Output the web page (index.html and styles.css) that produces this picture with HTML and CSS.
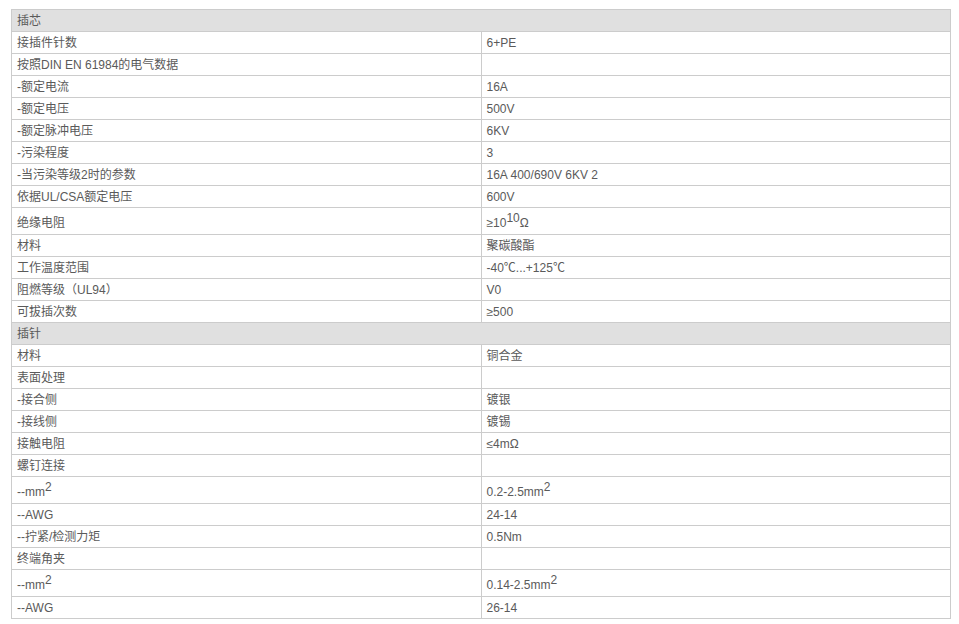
FILE: index.html
```html
<!DOCTYPE html>
<html lang="zh">
<head>
<meta charset="utf-8">
<title>参数</title>
<link rel="stylesheet" href="styles.css">
</head>
<body>
<table class="spec">
  <tr class="group"><td colspan="2">插芯</td></tr>
  <tr><td class="k">接插件针数</td><td>6+PE</td></tr>
  <tr><td class="k">按照DIN EN 61984的电气数据</td><td></td></tr>
  <tr><td class="k">-额定电流</td><td>16A</td></tr>
  <tr><td class="k">-额定电压</td><td>500V</td></tr>
  <tr><td class="k">-额定脉冲电压</td><td>6KV</td></tr>
  <tr><td class="k">-污染程度</td><td>3</td></tr>
  <tr><td class="k">-当污染等级2时的参数</td><td>16A 400/690V 6KV 2</td></tr>
  <tr><td class="k">依据UL/CSA额定电压</td><td>600V</td></tr>
  <tr class="tall"><td class="k">绝缘电阻</td><td>≥10<sup>10</sup>Ω</td></tr>
  <tr><td class="k">材料</td><td>聚碳酸酯</td></tr>
  <tr><td class="k">工作温度范围</td><td>-40℃...+125℃</td></tr>
  <tr><td class="k">阻燃等级（UL94）</td><td>V0</td></tr>
  <tr><td class="k">可拔插次数</td><td>≥500</td></tr>
  <tr class="group"><td colspan="2">插针</td></tr>
  <tr><td class="k">材料</td><td>铜合金</td></tr>
  <tr><td class="k">表面处理</td><td></td></tr>
  <tr><td class="k">-接合侧</td><td>镀银</td></tr>
  <tr><td class="k">-接线侧</td><td>镀锡</td></tr>
  <tr><td class="k">接触电阻</td><td>≤4mΩ</td></tr>
  <tr><td class="k">螺钉连接</td><td></td></tr>
  <tr class="tall"><td class="k">--mm<sup>2</sup></td><td>0.2-2.5mm<sup>2</sup></td></tr>
  <tr><td class="k">--AWG</td><td>24-14</td></tr>
  <tr><td class="k">--拧紧/检测力矩</td><td>0.5Nm</td></tr>
  <tr><td class="k">终端角夹</td><td></td></tr>
  <tr class="tall"><td class="k">--mm<sup>2</sup></td><td>0.14-2.5mm<sup>2</sup></td></tr>
  <tr><td class="k">--AWG</td><td>26-14</td></tr>
</table>
</body>
</html>
```
FILE: styles.css
```css
html, body {
  margin: 0;
  padding: 0;
  background: #ffffff;
}

body {
  font-family: "Liberation Sans", Arial, "Noto Sans CJK SC", sans-serif;
  font-size: 12px;
  color: #5a5a5a;
}

.spec {
  border-collapse: collapse;
  margin: 9px 0 0 11px;
  width: 940px;
  table-layout: fixed;
}

.spec td {
  border: 1px solid #cccccc;
  padding: 1px 5px 0 5px;
  line-height: 20px;
  vertical-align: top;
  white-space: nowrap;
}

.spec td.k {
  width: 456px;
}

.spec .group td {
  background: #e0e0e0;
}

.spec .tall td {
  padding-top: 5px;
  line-height: 21px;
}

.spec sup {
  font-size: 12px;
  line-height: 0;
  vertical-align: 5px;
}
```
